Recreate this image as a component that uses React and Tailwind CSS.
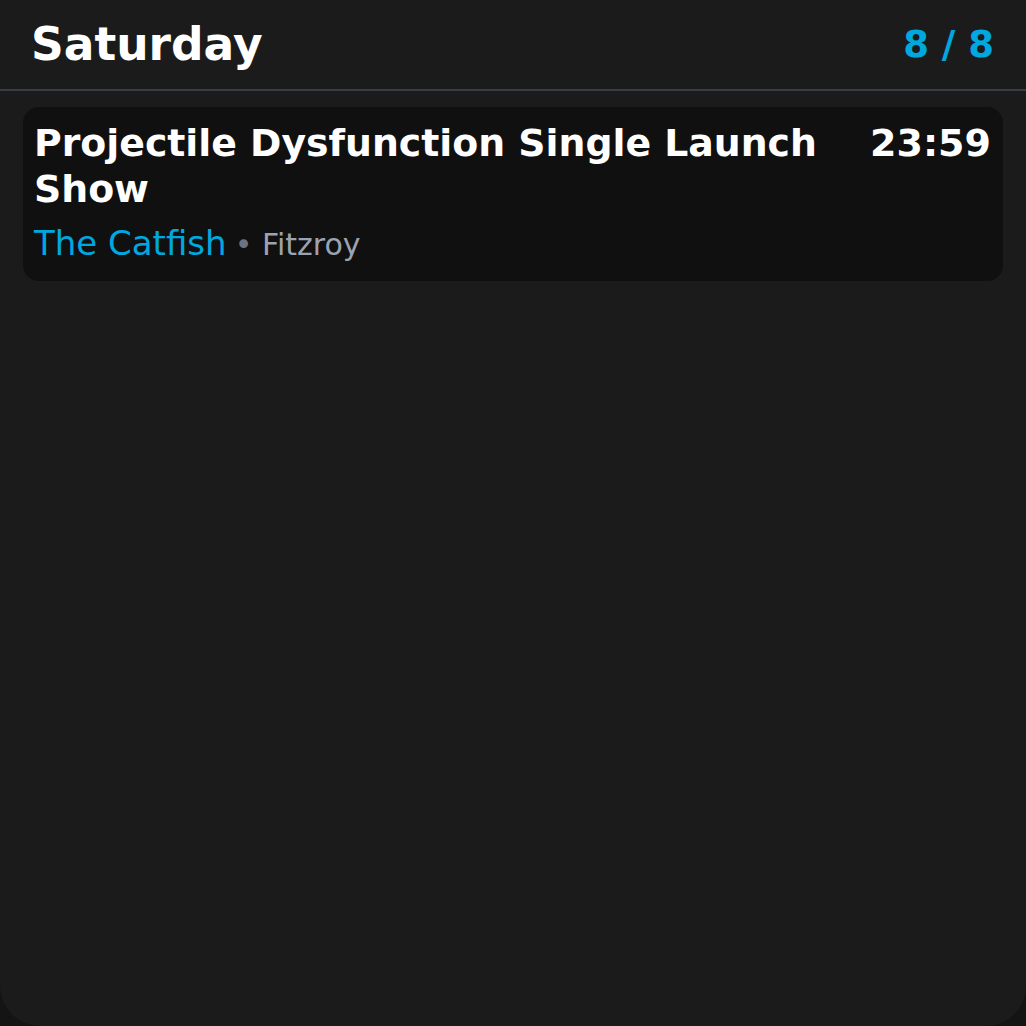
import React from 'react';

const events = [
  { title: 'Projectile Dysfunction Single Launch Show', time: '23:59', venue: 'The Catfish', suburb: 'Fitzroy' },
];

export default function App() {
  return (
    <div className="min-h-screen bg-[#141414]" style={{ fontFamily: '"DejaVu Sans", sans-serif' }}>
      <div className="h-[1026px] rounded-b-[40px] bg-[#1b1b1b] flex flex-col">
        {/* Header */}
        <div className="flex items-center justify-between h-[91px] pl-[31px] pr-[32px] border-b-2 border-[#393e46]">
          <h1 className="text-[45.5px] font-bold text-white leading-none">Saturday</h1>
          <span className="text-[37px] font-bold text-[#00a8e0] leading-none">8 / 8</span>
        </div>

        {/* Events */}
        <div className="flex flex-col gap-4 px-[23px] pt-[16px]">
          {events.map((ev) => (
            <div key={ev.title} className="rounded-2xl bg-[#101010] pl-[11px] pr-[12px] pt-[13px] pb-[21px]">
              <div className="flex items-start justify-between gap-6">
                <h2 className="text-[37.8px] font-bold text-white leading-[46px]">{ev.title}</h2>
                <span className="text-[38px] font-bold text-white leading-[46px] shrink-0">{ev.time}</span>
              </div>
              <div className="mt-[14px] flex items-baseline gap-[8px]">
                <span className="text-[34px] text-[#00a8e0] leading-none">{ev.venue}</span>
                <span className="text-[30px] text-[#9ca3af] leading-none">
                  <span className="text-[#6b7280]">•</span> {ev.suburb}
                </span>
              </div>
            </div>
          ))}
        </div>
      </div>
    </div>
  );
}
